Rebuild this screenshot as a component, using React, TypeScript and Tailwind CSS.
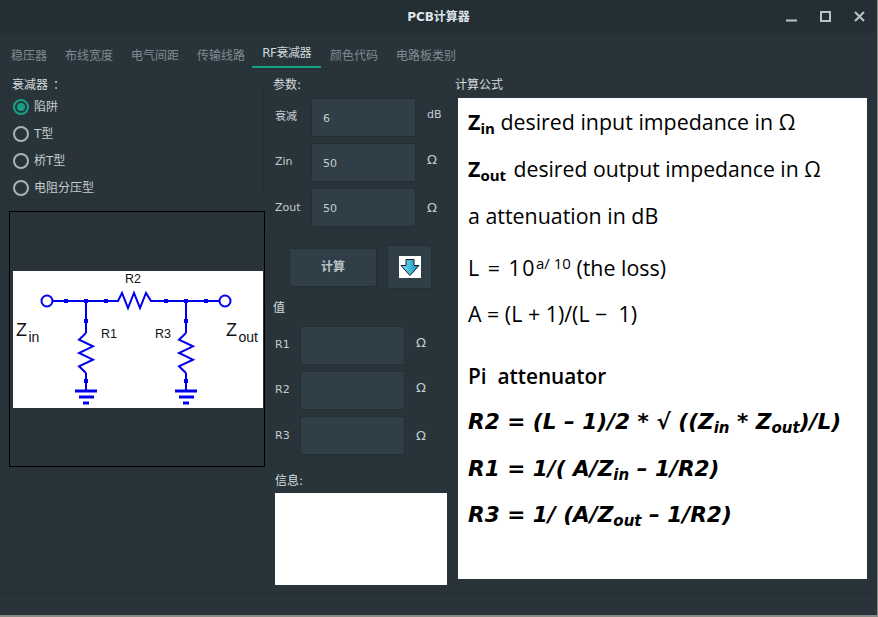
import React from 'react';

const uiFont = { fontFamily: '"DejaVu Sans", "Noto Sans CJK SC", sans-serif' };
const boldItalicFont = { fontFamily: '"DejaVu Sans", sans-serif' };

const tabs = ['稳压器', '布线宽度', '电气间距', '传输线路', 'RF衰减器', '颜色代码', '电路板类别'];
const radios = ['陷阱', 'T型', '桥T型', '电阻分压型'];

const GroupTitle = ({ children }: { children: React.ReactNode }) => (
    <span className="absolute -top-[9px] left-[0px] bg-[#29343a] px-[2px] text-[12px] leading-[16px] text-[#d5dcdf]">
        {children}
    </span>
);

const Field = ({ label, value, unit, inputClass, low }: { label: string; value?: string; unit: string; inputClass: string; low?: boolean }) => (
    <div className="flex h-[39px] items-center">
        <span className={`${low ? 'pt-[1px]' : ''} w-[30px] shrink-0 pl-[4px] text-[11px] text-[#c3ccd0]`}>{label}</span>
        <div className={`${inputClass} flex h-[39px] w-[105px] shrink-0 items-center rounded-[2px] border border-[#232e35] bg-[#303f47] pl-[11px] pt-[3px] text-[11px] text-[#c3ccd0]`}>
            {value}
        </div>
        <span className={`${low ? '' : 'pb-[5px]'} ml-[11px] ${unit === 'dB' ? 'text-[11px]' : 'text-[13px]'} text-[#c3ccd0]`}>{unit}</span>
    </div>
);

const Zig = ({ x, y0, y1 }: { x: number; y0: number; y1: number }) => {
    const step = (y1 - y0) / 6;
    const d = `M${x} ${y0} L${x - 7} ${y0 + step} L${x + 7} ${y0 + step * 2} L${x - 7} ${y0 + step * 3} L${x + 7} ${y0 + step * 4} L${x - 7} ${y0 + step * 5} L${x} ${y1}`;
    return <path d={d} fill="none" stroke="#0000ee" strokeWidth="2" />;
};

const Branch = ({ x }: { x: number }) => (
    <g stroke="#0000ee" fill="#0000ee">
        <line x1={x} y1="30" x2={x} y2="62" strokeWidth="2" />
        <Zig x={x} y0={62} y1={102} />
        <line x1={x} y1="102" x2={x} y2="120" strokeWidth="2" />
        <rect x={x - 2} y="28" width="4" height="4" strokeWidth="0" />
        <rect x={x - 2} y="48" width="4" height="4" strokeWidth="0" />
        <rect x={x - 2} y="108" width="4" height="4" strokeWidth="0" />
        <line x1={x - 11} y1="120" x2={x + 11} y2="120" strokeWidth="3" />
        <line x1={x - 7} y1="126" x2={x + 8} y2="126" strokeWidth="3" />
        <line x1={x - 3} y1="132" x2={x + 3} y2="132" strokeWidth="3" />
    </g>
);

const Circuit = () => (
    <svg viewBox="0 0 250 137" width="250" height="137" className="block bg-white">
        <g stroke="#0000ee" fill="none" strokeWidth="2">
            <circle cx="34" cy="30" r="5.5" />
            <circle cx="212" cy="30" r="5.5" />
            <path d="M40 30 H105 L109 22 L115 37 L121 22 L127 37 L133 22 L138 30 H206" />
        </g>
        <g fill="#0000ee">
            <rect x="51" y="28" width="4" height="4" />
            <rect x="91" y="28" width="4" height="4" />
            <rect x="151" y="28" width="4" height="4" />
            <rect x="191" y="28" width="4" height="4" />
        </g>
        <Branch x={73} />
        <Branch x={173} />
        <g fontFamily='"Liberation Sans", sans-serif' fill="#111">
            <text x="112" y="12" fontSize="12.5">R2</text>
            <text x="88" y="67" fontSize="12.5">R1</text>
            <text x="142" y="67" fontSize="12.5">R3</text>
            <text x="3" y="65" fontSize="18">Z</text>
            <text x="15.5" y="71" fontSize="14">in</text>
            <text x="213" y="65" fontSize="18">Z</text>
            <text x="225.5" y="71" fontSize="14">out</text>
        </g>
    </svg>
);

const ArrowIcon = () => (
    <svg viewBox="0 0 22 22" width="22" height="22" className="block bg-white">
        <defs>
            <linearGradient id="arrowFill" x1="0" y1="0" x2="1" y2="0">
                <stop offset="0" stopColor="#7fe0f0" />
                <stop offset="1" stopColor="#0f8fc0" />
            </linearGradient>
        </defs>
        <path d="M7 3.5 H15 V9.5 H20 L11 19.5 L2 9.5 H7 Z" fill="url(#arrowFill)" stroke="#08202c" strokeWidth="1" />
    </svg>
);

const FormulaLine = ({ className, children, style }: { className: string; children: React.ReactNode; style?: React.CSSProperties }) => (
    <p className={`${className} h-[30px] whitespace-nowrap leading-[30px] text-black`} style={style}>{children}</p>
);

const App = () => {
    return (
        <div className="flex h-[617px] w-[878px] flex-col overflow-hidden bg-[#8a8a86]" style={uiFont}>
            <div className="flex h-[615px] w-[877px] flex-col bg-[#29343a]">
                {/* title bar */}
                <div className="relative flex h-[33px] items-center justify-center bg-[#232e35]">
                    <span className="text-[12px] font-bold text-[#dfe5e8]">PCB计算器</span>
                    <div className="absolute right-[12px] top-[11px] flex items-center gap-[23px]">
                        <svg width="11" height="12" viewBox="0 0 11 12"><line x1="0" y1="9.5" x2="11" y2="9.5" stroke="#b9c4c9" strokeWidth="2" /></svg>
                        <svg width="11" height="12" viewBox="0 0 11 12"><rect x="1" y="1" width="9" height="9" fill="none" stroke="#b9c4c9" strokeWidth="2" /></svg>
                        <svg width="11" height="12" viewBox="0 0 11 12"><path d="M1 1 L10 10 M10 1 L1 10" fill="none" stroke="#b9c4c9" strokeWidth="2" /></svg>
                    </div>
                </div>

                {/* tabs */}
                <div className="flex h-[36px] items-end border-b border-[#232e35] pl-[2px]">
                    {tabs.map((tab, i) =>
                        i === 4 ? (
                            <div key={tab} className="-ml-[2px] flex h-[35px] w-[69px] items-center justify-center border-b-[2px] border-[#16a085] pt-[7px] text-[12px] tracking-[-0.5px] text-[#cfd8dc]">
                                {tab}
                            </div>
                        ) : (
                            <div key={tab} className="flex h-[35px] items-center px-[9px] pt-[10px] text-[12px] text-[#7f8c92]">
                                {tab}
                            </div>
                        ),
                    )}
                </div>

                <div className="flex h-[524px] border-b border-[#232e35] pl-[9px] pt-[16px]">
                    {/* left column */}
                    <div className="w-[256px] shrink-0">
                        <div className="relative h-[115px] w-[255px] border border-[#253036] pt-[7px]">
                            <GroupTitle>衰减器<span className="ml-[5px]">：</span></GroupTitle>
                            <div className="flex flex-col">
                                {radios.map((r, i) => (
                                    <div key={r} className="flex h-[27px] items-center pl-[3px] text-[12px] text-[#c3ccd0]">
                                        {i === 0 ? (
                                            <span className="flex h-[16px] w-[16px] items-center justify-center rounded-full border-[2px] border-[#16a085]">
                                                <span className="h-[8px] w-[8px] rounded-full bg-[#16a085]" />
                                            </span>
                                        ) : (
                                            <span className="h-[16px] w-[16px] rounded-full border-[2px] border-[#a9b3b7]" />
                                        )}
                                        <span className="ml-[5px]">{r}</span>
                                    </div>
                                ))}
                            </div>
                        </div>
                        <div className="mt-[11px] flex h-[256px] w-[256px] items-center border border-black pl-[3px]">
                            <Circuit />
                        </div>
                    </div>

                    {/* middle column */}
                    <div className="ml-[5px] w-[182px] shrink-0">
                        <div className="relative h-[148px] w-[177px] border border-[#253036] pt-[12px]">
                            <GroupTitle>参数:</GroupTitle>
                            <div className="flex flex-col gap-[6px]">
                                <Field label="衰减" value="6" unit="dB" inputClass="ml-[10px]" />
                                <Field label="Zin" value="50" unit="Ω" inputClass="ml-[10px]" />
                                <Field label="Zout" value="50" unit="Ω" inputClass="ml-[10px]" low />
                            </div>
                        </div>
                        <div className="mt-[12px] flex h-[44px] items-center pl-[19px]">
                            <div className="flex h-[39px] w-[88px] items-center justify-center rounded-[2px] border border-[#232e35] bg-[#303f47] text-[12px] font-bold text-[#b9c4c9]">
                                计算
                            </div>
                            <div className="ml-[10px] flex h-[44px] w-[45px] items-center justify-center rounded-[2px] border border-[#232e35] bg-[#303f47]">
                                <ArrowIcon />
                            </div>
                        </div>
                        <div className="relative mt-[19px] h-[158px] w-[181px] border border-[#253036] pt-[17px]">
                            <GroupTitle>值</GroupTitle>
                            <div className="flex flex-col gap-[6px]">
                                <Field label="R1" unit="Ω" inputClass="-ml-[1px]" />
                                <Field label="R2" unit="Ω" inputClass="-ml-[1px]" />
                                <Field label="R3" unit="Ω" inputClass="-ml-[1px]" low />
                            </div>
                        </div>
                        <div className="flex h-[27px] items-center pl-[5px] pt-[2px] text-[12px] text-[#d5dcdf]">信息:</div>
                        <div className="ml-[5px] h-[92px] w-[172px] bg-white" />
                    </div>

                    {/* formula panel */}
                    <div className="relative ml-[1px] h-[500px] w-[418px] border border-[#253036] pl-[4px] pt-[12px]">
                        <span className="absolute -top-[9px] -left-[1px] bg-[#29343a] px-[2px] text-[12px] leading-[16px] text-[#d5dcdf]">计算公式</span>
                        <div className="h-[481px] w-[409px] bg-white pl-[10px] pt-[9px] text-[21.4px]" style={{ fontFamily: '"Open Sans", sans-serif' }}>
                            <FormulaLine className="">
                                <b>Z<sub className="text-[15px]">in</sub></b> desired input impedance in Ω
                            </FormulaLine>
                            <FormulaLine className="mt-[17px]">
                                <b>Z<sub className="text-[15px]">out</sub></b><span className="ml-[2px] text-[21.2px]"> desired output impedance in Ω</span>
                            </FormulaLine>
                            <FormulaLine className="mt-[17px]">a attenuation in dB</FormulaLine>
                            <FormulaLine className="mt-[22px]">
                                <span className="tracking-[1.5px]">L = 10</span><sup className="text-[15px]">a/ 10</sup> (the loss)
                            </FormulaLine>
                            <FormulaLine className="mt-[16px]">A = (L + 1)/(L − &nbsp;1)</FormulaLine>
                            <FormulaLine className="mt-[32px] text-[20.8px] font-semibold">Pi &nbsp;attenuator</FormulaLine>
                            <FormulaLine className="mt-[16px] text-[21.6px] font-bold italic" style={boldItalicFont}>
                                R2 = (L – 1)/2 * √ ((Z<sub className="text-[15px]">in</sub> * Z<sub className="text-[15px]">out</sub>)/L)
                            </FormulaLine>
                            <FormulaLine className="mt-[17px] text-[21.6px] font-bold italic" style={boldItalicFont}>
                                R1 = 1/( A/Z<sub className="text-[15px]">in</sub> – 1/R2)
                            </FormulaLine>
                            <FormulaLine className="mt-[16px] text-[21.6px] font-bold italic" style={boldItalicFont}>
                                R3 = 1/ (A/Z<sub className="text-[15px]">out</sub> – 1/R2)
                            </FormulaLine>
                        </div>
                    </div>
                </div>
                <div className="h-[21px]" />
            </div>
        </div>
    );
};

export default App;
